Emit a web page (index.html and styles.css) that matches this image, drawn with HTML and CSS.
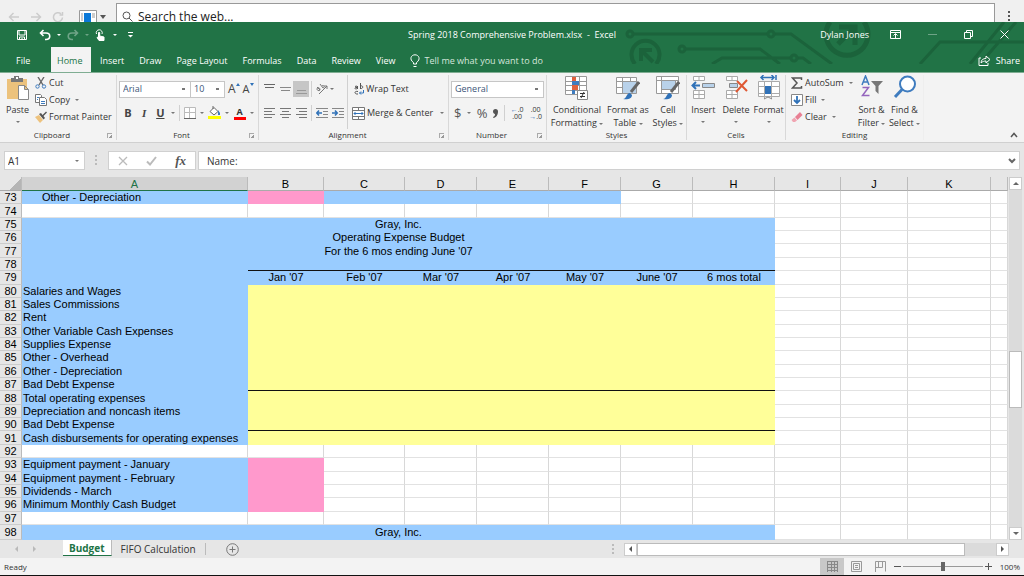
FILE: index.html
```html
<!DOCTYPE html>
<html lang="en">
<head>
  <meta charset="UTF-8">
  <meta name="viewport" content="width=device-width, initial-scale=1.0">
  <title>Spring 2018 Comprehensive Problem.xlsx - Excel</title>
  <link rel="stylesheet" href="styles.css">
</head>
<body>
  <div class="browser">
    <button class="nav" aria-label="Back"><svg width="12" height="12" viewBox="0 0 12 12"><path d="M11 6H1.500M5.500 2L1.500 6l4 4"/></svg></button>
    <button class="nav" aria-label="Forward"><svg width="12" height="12" viewBox="0 0 12 12"><path d="M1 6h9.500M6.500 2l4 4-4 4"/></svg></button>
    <button class="nav" aria-label="Reload"><svg width="12" height="12" viewBox="0 0 12 12"><path d="M10.500 6.500A4.500 4.500 0 1 1 9 2.800M10.500 1v3h-3"/></svg></button>
    <button class="panel" aria-label="Panels">
      <svg width="18" height="13" viewBox="0 0 18 13"><path fill="#fff" stroke="#999" d="M.5.5h17v13H.5z"/><path fill="#ccc" d="M2 3h2v8H2zM13 3h3v5h-3z"/><path fill="#0a78d8" d="M5 3h7v9H5z"/></svg>
      <svg width="6" height="4" viewBox="0 0 6 4"><path fill="#555" d="M0 0h6L3 4z"/></svg>
    </button>
    <label class="search">
      <svg width="11" height="11" viewBox="0 0 11 11"><circle cx="4.500" cy="4.500" r="3.500"/><path d="M7 7l3.500 3.500"/></svg>
      <input type="text" value="Search the web..." aria-label="Search the web">
    </label>
    <button class="more" aria-label="More"><svg width="3" height="11" viewBox="0 0 3 11"><path fill="#555" d="M0 0h2v2H0zM0 4h2v2H0zM0 8h2v2H0z"/></svg></button>
  </div>

  <header class="head">
    <svg class="circuit" width="400" height="42" viewBox="0 0 400 42">
      <g fill="none" stroke="#1b633b" stroke-width="3">
        <circle cx="6" cy="12" r="3"/><path d="M9 12h134M150 12h17l41 30"/><circle cx="147" cy="12" r="3"/>
        <circle cx="58" cy="27" r="3"/><path d="M61 27h75l20 15M88 42l10-6h68M174 36h5l8 6"/><circle cx="170" cy="36" r="3"/>
        <path d="M296 42l20-22h84M346 42L380 0M356 42L392 0"/>
        <path stroke-width="4" d="M11 42a14 14 0 1 1 21 0"/>
        <path stroke-width="4" d="M17 28l12 12M17 39V28h11"/>
        <path stroke-width="5" d="M206 0a21 21 0 1 0 34 0M214 22l17-17M215 5h16v18"/>
      </g>
    </svg>
    <div class="title">
      <div class="quick">
        <button aria-label="Save"><svg width="12" height="12" viewBox="0 0 12 12"><path d="M1.500 1.500h9v9h-9zM3 1v5h6V1M3.500 11V8h5v3M6 9v2"/></svg></button>
        <button class="undo" aria-label="Undo"><svg width="12" height="12" viewBox="0 0 12 12"><path stroke-width="1.600" d="M4.500 1L1.500 4l3 3M2 4h5c5 0 5 6.500 0 6.500H6"/></svg></button><span class="caret"></span>
        <button class="dim" aria-label="Redo"><svg width="12" height="12" viewBox="0 0 12 12"><path stroke-width="1.600" d="M7.500 1l3 3-3 3M10 4H5c-5 0-5 6.500 0 6.500h1"/></svg></button><span class="caret dim"></span>
        <button aria-label="Touch mode"><svg width="12" height="12" viewBox="0 0 12 12"><path d="M1.500 5a3 3 0 1 1 5.500 0"/><path fill="#fff" d="M3.500 3.500h1.200V7l4.300 1v3.500H4L2 8.500l1.500-.5z"/></svg></button><span class="caret"></span>
        <button class="custom" aria-label="Customize toolbar"><svg width="5" height="6" viewBox="0 0 5 6"><path d="M0 .500h5"/><path fill="#fff" stroke="none" d="M0 3h5L2.500 5.500z"/></svg></button>
      </div>
      <h1>Spring 2018 Comprehensive Problem.xlsx &nbsp;- &nbsp;Excel</h1>
      <div class="account">
        <span class="user">Dylan Jones</span>
        <button aria-label="Ribbon display options"><svg width="11" height="9" viewBox="0 0 11 9"><path d="M.5.5h10v8H.5zM.5 2.500h10M5.500 8V4M3.500 5.500l2-2 2 2"/></svg></button>
        <button class="dim" aria-label="Minimize"><svg width="9" height="9" viewBox="0 0 9 9"><path d="M0 4.500h9"/></svg></button>
        <button aria-label="Restore"><svg width="9" height="9" viewBox="0 0 9 9"><path d="M.5 2.500h6v6h-6zM2.500 2.500v-2h6v6h-2"/></svg></button>
        <button aria-label="Close"><svg width="9" height="9" viewBox="0 0 9 9"><path d="M.5.5l8 8M8.500.5l-8 8"/></svg></button>
      </div>
    </div>
    <nav class="tabs">
      <a href="#" class="file">File</a>
      <a href="#" class="active">Home</a>
      <a href="#">Insert</a>
      <a href="#">Draw</a>
      <a href="#">Page Layout</a>
      <a href="#">Formulas</a>
      <a href="#">Data</a>
      <a href="#">Review</a>
      <a href="#">View</a>
      <a href="#" class="tell"><svg width="10" height="14" viewBox="0 0 10 14"><path d="M3.500 10V8.500C-1 5.500 1 .8 5 .8s6 4.700 1.500 7.700V10zM3.500 12.500h3"/></svg>Tell me what you want to do</a>
      <a href="#" class="share"><svg width="13" height="11" viewBox="0 0 13 11"><path d="M3 3H1v7.500h9V8M3 8c0-3 2-4.500 5-4.500V1l4 3.500-4 3.500V6C6 6 4.500 6.500 3 8z"/></svg>Share</a>
    </nav>
  </header>

  <div class="ribbon">
    <section class="group clipboard">
      <div class="tools">
        <button class="big"><svg width="24" height="26" viewBox="0 0 24 26"><path fill="#ecc27c" d="M1 4h20v20H1z"/><path fill="#777" d="M5 3h3V1h5v2h4v4H5z"/><path fill="#fff" d="M10 2h2v2h-2z"/><path fill="#fff" stroke="#888" d="M12.500 10.500h6l4 4v10h-10zM18.500 10.500v4h4"/></svg><span>Paste</span><span class="caret"></span></button>
        <div class="list">
          <button><svg width="12" height="12" viewBox="0 0 12 12"><path stroke="#666" stroke-width="1.400" d="M3 0l5 8M9 0L4 8"/><circle cx="2.500" cy="9.500" r="1.700" stroke="#3f7cbf"/><circle cx="9" cy="9.500" r="1.700" stroke="#3f7cbf"/></svg>Cut</button>
          <button><svg width="12" height="12" viewBox="0 0 12 12"><path fill="#fff" stroke="#777" d="M.5.500h5l1 1v7h-6z"/><path fill="#fff" stroke="#777" d="M4.500 3.500h5l2 2v6h-7z"/><path stroke="#3f7cbf" d="M2 3.500h2M2 5.500h1M6 7.500h4M6 9.500h4"/></svg>Copy <span class="caret"></span></button>
          <button><svg width="12" height="12" viewBox="0 0 12 12"><path fill="#edc27d" d="M0 6l4-2 4 5-3 3z"/><path fill="#555" d="M4 3l2-1 1.500 2L11 .500l1 1L8.500 5 10 7 8.500 8.500z"/></svg>Format Painter</button>
        </div>
      </div>
      <h2>Clipboard</h2><i class="launch"></i>
    </section>

    <section class="group font">
      <div class="tools stack">
        <div class="line">
          <select class="face" aria-label="Font"><option>Arial</option></select>
          <select class="size" aria-label="Font size"><option>10</option></select>
          <button class="letter grow" aria-label="Grow font">A<svg width="4" height="12" viewBox="0 0 4 12"><path fill="#3072b8" d="M0 3l2-3 2 3z"/></svg></button>
          <button class="letter shrink" aria-label="Shrink font">A<svg width="4" height="12" viewBox="0 0 4 12"><path fill="#3072b8" d="M0 0h4L2 3z"/></svg></button>
        </div>
        <div class="line spread">
          <button class="letter"><b>B</b></button>
          <button class="letter"><em>I</em></button>
          <button class="letter"><u>U</u></button><span class="caret"></span>
          <span class="rule"></span>
          <button aria-label="Borders"><svg width="12" height="12" viewBox="0 0 12 12"><path fill="#fff" stroke="#bbb" d="M.5.500h11v11H.5zM5.500 0v12M0 5.500h12"/><path stroke="#666" d="M0 11.500h12"/></svg></button><span class="caret"></span>
          <button aria-label="Fill color"><svg width="13" height="14" viewBox="0 0 13 14"><path fill="#ff0" d="M0 10h13v3H0z"/><path fill="#fff" stroke="#666" d="M2 5.500l4-4 4 4-4 3.500zM5 3V0"/><path fill="#3f7cbf" d="M10 4l2 3v2h-2z"/></svg></button><span class="caret"></span>
          <button aria-label="Font color" class="ink">A</button><span class="caret"></span>
        </div>
      </div>
      <h2>Font</h2><i class="launch"></i>
    </section>

    <section class="group align">
      <div class="tools">
        <div class="stack left">
          <div class="line">
            <button aria-label="Top align"><svg width="11" height="12" viewBox="0 0 11 12"><path stroke="#666" d="M0 1.500h11M1 4.500h9"/></svg></button>
            <button aria-label="Middle align"><svg width="11" height="12" viewBox="0 0 11 12"><path stroke="#888" d="M0 4.500h11M1 7.500h9"/></svg></button>
            <button class="pressed" aria-label="Bottom align"><svg width="11" height="12" viewBox="0 0 11 12"><path stroke="#999" d="M1 7.500h9M0 10.500h11"/></svg></button>
            <span class="rule"></span>
            <button aria-label="Orientation"><svg width="12" height="12" viewBox="0 0 12 12"><path stroke="#777" d="M3 11l8-8M8 3h3v3M1 4l3 3M1 6c0-2 3-2 3 1 0 1-3 1-3-1M4 1l3 4M6 3c2-2 3 2 1 2"/></svg></button><span class="caret"></span>
          </div>
          <div class="line">
            <button aria-label="Align left"><svg width="11" height="12" viewBox="0 0 11 12"><path stroke="#777" d="M0 1.500h11M0 4.500h8M0 7.500h11M0 10.500h8"/></svg></button>
            <button aria-label="Center"><svg width="11" height="12" viewBox="0 0 11 12"><path stroke="#777" d="M0 1.500h11M2 4.500h7M0 7.500h11M2 10.500h7"/></svg></button>
            <button aria-label="Align right"><svg width="11" height="12" viewBox="0 0 11 12"><path stroke="#777" d="M0 1.500h11M3 4.500h8M0 7.500h11M3 10.500h8"/></svg></button>
            <span class="rule"></span>
            <button aria-label="Decrease indent"><svg width="12" height="12" viewBox="0 0 12 12"><path stroke="#888" d="M0 1.500h12M7 4.500h5M7 7.500h5M0 10.500h12"/><path stroke="#3072b8" stroke-width="1.600" d="M6 6H1M3 3.500L.800 6 3 8.500"/></svg></button>
            <button aria-label="Increase indent"><svg width="12" height="12" viewBox="0 0 12 12"><path stroke="#888" d="M0 1.500h12M7 4.500h5M7 7.500h5M0 10.500h12"/><path stroke="#3072b8" stroke-width="1.600" d="M0 6h5M3 3.500L5.200 6 3 8.500"/></svg></button>
          </div>
        </div>
        <div class="stack right">
          <div class="line"><button class="wrap"><svg width="10" height="12" viewBox="0 0 10 12"><path stroke="#555" d="M3.500 3v3M1 3.500c2-1 2.500 0 2.500 1.500C2 7 0 5.500 1.500 4.500h2M6.500 0v6M6.500 3c3-1 3 3 0 2.500M4 8.500c-4-1-4 3 0 2.500"/><path stroke="#3072b8" d="M9.500 7v3h-4M7 8.500L5.500 10 7 11.500"/></svg>Wrap Text</button></div>
          <div class="line"><button><svg width="13" height="13" viewBox="0 0 13 13"><path fill="#fff" stroke="#777" d="M.5.500h12v12H.5zM0 3.500h13M0 9.500h13M6.500 0v3M6.500 10v3"/><path stroke="#3072b8" d="M2 6.500h9M3.500 5L2 6.500 3.500 8M9.500 5L11 6.500 9.500 8"/></svg>Merge &amp; Center</button><span class="caret end"></span></div>
        </div>
      </div>
      <h2>Alignment</h2><i class="launch"></i>
    </section>

    <section class="group number">
      <div class="tools stack">
        <div class="line"><select class="format" aria-label="Number format"><option>General</option></select></div>
        <div class="line spread">
          <button class="sign">$</button><span class="caret"></span>
          <button class="sign">%</button>
          <button aria-label="Comma style"><svg width="5" height="9" viewBox="0 0 5 9"><path fill="#555" d="M0 2.500a2.400 2.400 0 1 1 5 0C5 6 3 8.500.500 9L0 8c1.500-.500 2-1.500 2-3C1 5 0 4 0 2.500z"/></svg></button>
          <span class="rule"></span>
          <button class="decimal" aria-label="Increase decimal"><span><b>←</b>.0</span><span>.00</span></button>
          <button class="decimal" aria-label="Decrease decimal"><span>.00</span><span><b>→</b>.0</span></button>
        </div>
      </div>
      <h2>Number</h2><i class="launch"></i>
    </section>

    <section class="group styles">
      <div class="tools">
        <button class="big"><svg width="24" height="26" viewBox="0 0 24 26"><path fill="#fff" stroke="#999" d="M.5 1.500h21v18H.5zM0 6.500h22M0 10.500h22M0 15.500h22M7.500 1v19M14.500 1v19"/><path fill="#e0623d" d="M7 2h4v4H7zM7 10h6v5H7z"/><path fill="#3f7cbf" d="M7 6h7v4H7zM7 15h3v4H7z"/><path fill="#fff" stroke="#888" d="M12.500 15.500h10v9h-10z"/><path stroke="#333" d="M15 18.500h5M15 21.500h5M19 17l-3 6"/></svg><span>Conditional</span><span>Formatting <i class="caret"></i></span></button>
        <button class="big"><svg width="24" height="26" viewBox="0 0 24 26"><path fill="#fff" stroke="#999" d="M.5 2.500h20v16H.5zM0 6.500h21M0 12.500h21M6.500 2v17M14.500 2v17"/><path fill="#b9d2ea" d="M7 7h13v11H7z"/><path stroke="#666" stroke-width="3" d="M23 7l-8 10"/><path fill="#3072b8" d="M7 24c4 0 3-6 7-6l2 2c0 4-5 5-9 4z"/></svg><span>Format as</span><span>Table <i class="caret"></i></span></button>
        <button class="big"><svg width="24" height="26" viewBox="0 0 24 26"><path fill="#fff" stroke="#999" d="M.5 1.500h22v17H.5zM0 5.500h23M5.500 1v18"/><path fill="#b9d2ea" stroke="#999" d="M5.500 5.500h14v9h-14z"/><path stroke="#666" stroke-width="3" d="M23 7l-8 10"/><path fill="#3072b8" d="M7 24c4 0 3-6 7-6l2 2c0 4-5 5-9 4z"/></svg><span>Cell</span><span>Styles <i class="caret"></i></span></button>
      </div>
      <h2>Styles</h2>
    </section>

    <section class="group cells">
      <div class="tools">
        <button class="big"><svg width="24" height="26" viewBox="0 0 24 26"><path fill="#fff" stroke="#aaa" d="M2.500 1.500h11v4h-11zM8 1v5M2.500 15.500h11v8h-11zM8 15v9M2 19.500h12"/><path fill="#b9d2ea" stroke="#888" d="M11.500 8.500h12v4h-12z"/><path stroke="#3072b8" stroke-width="2" d="M9 10.500H1M5 7l-3.500 3.500L5 14"/></svg><span>Insert</span><span class="caret"></span></button>
        <button class="big"><svg width="24" height="26" viewBox="0 0 24 26"><path fill="#fff" stroke="#aaa" d="M2.500 1.500h11v4h-11zM8 1v5M2.500 15.500h11v8h-11zM8 15v9M2 19.500h12"/><path fill="#b9d2ea" stroke="#888" d="M5.500 8.500h8v4h-8z"/><path stroke="#df5833" stroke-width="2" d="M13 6l10 10M23 5L12 17"/></svg><span>Delete</span><span class="caret"></span></button>
        <button class="big"><svg width="24" height="26" viewBox="0 0 24 26"><path fill="#fff" stroke="#aaa" d="M1.500 6.500h21v15h-21zM1 11.500h22M1 18.500h22M7.500 6v18M14.500 6v18"/><path fill="#3072b8" d="M8 11h6v8H8z"/><path stroke="#3072b8" stroke-width="1.500" d="M4 2.500h13M6.500 0L4 2.500 6.500 5M14.500 0L17 2.500 14.500 5M19 0v5"/><path stroke="#888" d="M7 24l4-2 4 2"/></svg><span>Format</span><span class="caret"></span></button>
      </div>
      <h2>Cells</h2>
    </section>

    <section class="group editing">
      <div class="tools">
        <div class="list">
          <button><svg width="12" height="12" viewBox="0 0 12 12"><path stroke="#555" stroke-width="1.500" d="M10.500 3V1H1.500L6 6l-4.500 5h9V9"/></svg>AutoSum <span class="caret"></span></button>
          <button><svg width="12" height="12" viewBox="0 0 12 12"><path fill="#fff" stroke="#888" d="M.5.500h11v11H.5z"/><path stroke="#3072b8" stroke-width="1.800" d="M6 2v7M3 6l3 3 3-3"/></svg>Fill <span class="caret"></span></button>
          <button><svg width="12" height="12" viewBox="0 0 12 12"><path fill="#e87f93" d="M4 6l5-5 2.500 3-5 5z"/><path fill="#f0a5b2" d="M3.500 6.500L6 9.500 4 11H2L.5 9z"/></svg>Clear <span class="caret"></span></button>
        </div>
        <button class="big"><svg width="24" height="26" viewBox="0 0 24 26"><path stroke="#3f7cbf" stroke-width="1.500" d="M2 10L5.500 1 9 10M3.500 7h4"/><path stroke="#9464bd" stroke-width="1.500" d="M2.500 12.500h6l-6 8h7"/><path fill="#777" d="M11 6h12l-4.500 5v8L15.500 16v-5z"/></svg><span>Sort &amp;</span><span>Filter <i class="caret"></i></span></button>
        <button class="big"><svg width="24" height="26" viewBox="0 0 24 26"><circle cx="14.500" cy="9" r="7.500" fill="#fff" stroke="#3f7cbf" stroke-width="2"/><path stroke="#3f7cbf" stroke-width="3" d="M9 14.500L2 22"/></svg><span>Find &amp;</span><span>Select <i class="caret"></i></span></button>
      </div>
      <h2>Editing</h2>
    </section>
    <button class="fold" aria-label="Collapse ribbon"><svg width="8" height="6" viewBox="0 0 8 6"><path stroke="#555" stroke-width="1.500" d="M1 5l3-3.500L7 5"/></svg></button>
  </div>

  <div class="formula">
    <label class="namebox"><input type="text" value="A1" aria-label="Name box"><span class="caret"></span></label>
    <span class="dots"></span>
    <div class="fx">
      <button aria-label="Cancel"><svg width="10" height="10" viewBox="0 0 10 10"><path stroke="#bbb" stroke-width="1.300" d="M1 1l8 8M9 1L1 9"/></svg></button>
      <button aria-label="Enter"><svg width="11" height="10" viewBox="0 0 11 10"><path stroke="#bbb" stroke-width="2" d="M1 5.500L4 8.500 10 1"/></svg></button>
      <button class="fn">fx</button>
    </div>
    <label class="formula-box"><input type="text" value="Name:" aria-label="Formula bar"><svg width="8" height="6" viewBox="0 0 8 6"><path stroke="#666" stroke-width="2" d="M1 1l3 3 3-3"/></svg></label>
  </div>

  <main class="sheet">
    <table>
      <colgroup>
        <col class="c-row"><col class="c-a"><col class="c-b"><col class="c-c">
        <col class="c-m"><col class="c-m"><col class="c-m"><col class="c-m">
        <col class="c-h"><col class="c-i"><col class="c-j"><col class="c-k"><col>
      </colgroup>
      <thead>
        <tr><th class="corner"></th><th class="picked">A</th><th>B</th><th>C</th><th>D</th><th>E</th><th>F</th><th>G</th><th>H</th><th>I</th><th>J</th><th>K</th><th></th></tr>
      </thead>
      <tbody id="rows"></tbody>
    </table>
    <div class="vscroll">
      <button aria-label="Scroll up"><i class="up"></i></button>
      <div class="track"><div class="thumb"></div></div>
      <button aria-label="Scroll down"><i class="down"></i></button>
    </div>
  </main>

  <div class="bottom">
    <div class="arrows"><i class="prev"></i><i class="next"></i></div>
    <button class="tab current">Budget</button>
    <button class="tab">FIFO Calculation</button>
    <button class="add" aria-label="New sheet"><svg width="13" height="13" viewBox="0 0 13 13"><circle cx="6.500" cy="6.500" r="5.800" stroke="#777"/><path stroke="#777" d="M6.500 3.500v6M3.500 6.500h6"/></svg></button>
    <span class="dots"></span>
    <div class="hscroll">
      <button aria-label="Scroll left"><i class="prev"></i></button>
      <div class="track"><div class="thumb"></div></div>
      <button aria-label="Scroll right"><i class="next"></i></button>
    </div>
  </div>

  <footer class="status">
    <span class="ready">Ready</span>
    <button class="view on" aria-label="Normal"><svg width="11" height="11" viewBox="0 0 11 11"><path stroke="#888" d="M0 .500h11M0 3.500h11M0 6.500h11M0 9.500h11M.500 0v11M4.500 0v11M7.500 0v11M10.500 0v11"/></svg></button>
    <button class="view" aria-label="Page layout"><svg width="11" height="11" viewBox="0 0 11 11"><path stroke="#999" d="M.500.500h10v10H.500zM2.500 2.500h6v6h-6zM4 4.500h3M4 6.500h3"/></svg></button>
    <button class="view" aria-label="Page break preview"><svg width="11" height="11" viewBox="0 0 11 11"><path stroke="#999" d="M.500 11V.500h10v10M3.500 0v6.500h4V0M0 6.500h4"/></svg></button>
    <button class="step" aria-label="Zoom out"><svg width="7" height="7" viewBox="0 0 7 7"><path stroke="#555" d="M0 3.500h7"/></svg></button>
    <input type="range" min="0" max="100" value="50" aria-label="Zoom">
    <button class="step" aria-label="Zoom in"><svg width="7" height="7" viewBox="0 0 7 7"><path stroke="#555" d="M0 3.500h7M3.500 0v7"/></svg></button>
    <span class="percent">100%</span>
  </footer>

  <script>
    const months = ["Jan '07", "Feb '07", "Mar '07", "Apr '07", "May '07", "June '07", "6 mos total"];

    // kind decides how columns A-H are filled
    const rows = [
      [73, "first", "Other - Depreciation"],
      [74, "blank"],
      [75, "title", "Gray, Inc."],
      [76, "title", "Operating Expense Budget"],
      [77, "title", "For the 6 mos ending June '07"],
      [78, "line"],
      [79, "months"],
      [80, "entry", "Salaries and Wages"],
      [81, "entry", "Sales Commissions"],
      [82, "entry", "Rent"],
      [83, "entry", "Other Variable Cash Expenses"],
      [84, "entry", "Supplies Expense"],
      [85, "entry", "Other - Overhead"],
      [86, "entry", "Other - Depreciation"],
      [87, "total", "Bad Debt Expense"],
      [88, "entry", "Total operating expenses"],
      [89, "entry", "Depreciation and noncash items"],
      [90, "total", "Bad Debt Expense"],
      [91, "entry", "Cash disbursements for operating expenses"],
      [92, "blank"],
      [93, "input", "Equipment payment - January"],
      [94, "input", "Equipment payment - February"],
      [95, "input", "Dividends - March"],
      [96, "input", "Minimum Monthly Cash Budget"],
      [97, "blank"],
      [98, "title", "Gray, Inc."]
    ];

    const cell = (cls, text = "") => `<td class="${cls}">${text}</td>`;

    function fill(kind, text) {
      switch (kind) {
        case "first": return cell("blue indent", text) + cell("pink") + cell("blue").repeat(4) + cell("").repeat(2);
        case "title": return `<td class="blue center" colspan="8">${text}</td>`;
        case "line": return cell("blue") + cell("blue rule-b").repeat(7);
        case "months": return cell("blue") + months.map(m => cell("blue center", m)).join("");
        case "entry": return cell("blue", text) + cell("yellow").repeat(7);
        case "total": return cell("blue", text) + cell("yellow rule-b").repeat(7);
        case "input": return cell("blue", text) + cell("pink") + cell("").repeat(6);
        default: return cell("").repeat(8);
      }
    }

    document.getElementById("rows").innerHTML = rows.map(([n, kind, text]) =>
      `<tr><th>${n}</th>${fill(kind, text)}${cell("").repeat(4)}</tr>`
    ).join("");
  </script>
</body>
</html>
```
FILE: styles.css
```css
* { margin: 0; padding: 0; box-sizing: border-box; }

html, body { height: 100%; }

body {
  display: flex;
  flex-direction: column;
  font: 9px/12px "Open Sans", "Noto Sans", sans-serif;
  color: #333;
  background: #e6e6e6;
  border-bottom: 1px solid #111;
  overflow: hidden;
}

button, input, select {
  font: inherit;
  color: inherit;
  background: none;
  border: none;
  outline: none;
}

button {
  display: flex;
  align-items: center;
  white-space: nowrap;
}

a { color: inherit; text-decoration: none; }
svg { flex: none; fill: none; }
i { font-style: normal; }

.caret {
  display: inline-block;
  flex: none;
  border: 2px solid transparent;
  border-top: 2px solid #777;
  border-bottom: 0;
  vertical-align: middle;
}

/* browser bar */
.browser {
  display: flex;
  flex: none;
  height: 22px;
  padding: 3px 8px 0;
  background: #f0f0f0;
  overflow: hidden;
}

.browser > button { height: 27px; }
.nav { width: 22px; }
.nav svg { stroke: #ccc; stroke-width: 1.5; }
.panel { gap: 3px; width: 42px; padding-left: 5px; }

.search {
  display: flex;
  flex: 1;
  align-items: center;
  gap: 5px;
  height: 27px;
  padding-left: 5px;
  background: #fff;
  border: 1px solid #999;
}

.search svg { stroke: #555; }
.search input { flex: 1; font-size: 12px; color: #222; }
.more { width: 21px; padding-left: 13px; }

/* green header */
.head {
  position: relative;
  flex: none;
  color: #fff;
  background: #217346;
  border-bottom: 1px solid #7fad92;
}

.circuit { position: absolute; top: 0; right: 0; }

.title {
  position: relative;
  display: grid;
  grid-template-columns: 1fr auto 1fr;
  align-items: center;
  height: 25px;
}

.title svg, .tabs svg { stroke: #fff; }
.title h1 { font-size: 9px; font-weight: normal; }
.quick { display: flex; align-items: center; gap: 6px; padding-left: 16px; }
.quick .undo { margin-left: 5px; }
.quick .custom { margin-left: 5px; }
.quick .caret { border-top-color: #fff; }
.dim { opacity: .35; }
.account { display: flex; align-items: center; justify-content: flex-end; padding-right: 15px; gap: 27px; }
.user { margin-right: -6px; }

.tabs { position: relative; display: flex; height: 25px; }
.tabs a { display: flex; align-items: center; padding: 2px 7px 0 8px; }
.tabs .file { width: 51px; padding-left: 16px; }
.tabs .active { width: 40px; padding-left: 6px; margin-right: 1px; color: #217346; background: #f3f3f3; }
.tabs .tell { gap: 4px; color: #d5e6dc; }
.tabs .share { gap: 5px; margin-left: auto; padding-right: 4px; }

/* ribbon */
.ribbon {
  display: flex;
  flex: none;
  height: 70px;
  background: #f3f3f3;
  border-bottom: 1px solid #d0d0d0;
}

.group {
  position: relative;
  display: flex;
  flex: none;
  flex-direction: column;
  margin: 2px 0;
  border-right: 1px solid #d8d8d8;
}

.group h2 { font-size: 8px; line-height: 11px; font-weight: normal; text-align: center; }
.tools { display: flex; flex: 1; }
.clipboard { width: 117px; }
.clipboard h2 { padding-right: 12px; }
.font { width: 142px; }
.font h2 { padding-right: 12px; }
.align { width: 190px; }
.align h2, .number h2 { padding-right: 12px; }
.number { width: 98px; }
.styles { width: 140px; }
.cells { width: 99px; }
.editing { width: 138px; border-color: #eee; }

/* dialog launcher in the group's corner */
.launch {
  position: absolute;
  right: 4px;
  bottom: 2px;
  width: 5px;
  height: 5px;
  border-top: 1px solid #aaa;
  border-left: 1px solid #aaa;
  background: linear-gradient(135deg, transparent 55%, #999 55%);
}

.big { flex-direction: column; flex: 1; line-height: 13px; }
.big svg { margin-bottom: 2px; }
.big > .caret { margin-top: 5px; }
.clipboard .big { flex: none; width: 35px; }
.styles .big:first-child { flex: none; width: 60px; }
.styles .big:last-child { flex: none; width: 38px; }
.editing .tools { padding-right: 2px; }
.editing .list { width: 69px; padding-left: 5px; }
.list { display: flex; flex-direction: column; gap: 1px; }
.list button { gap: 2px; height: 16px; }
.list .caret { margin-left: 3px; }

.stack { display: flex; flex-direction: column; gap: 8px; padding-top: 6px; }
.line { display: flex; align-items: center; height: 16px; }
.spread { justify-content: space-between; padding: 0 4px 0 3px; }
.font .tools, .number .tools { padding-left: 2px; }
.rule { width: 1px; height: 16px; background: #d0d0d0; }

select {
  height: 17px;
  padding-left: 3px;
  color: #3b5578;
  appearance: none;
  border: 1px solid #c6c6c6;
  background: linear-gradient(#777, #777) right 5px center / 3px 2px no-repeat #fff;
}

.face { width: 72px; }
.size { width: 35px; margin-left: -1px; }
.format { width: 93px; }
.letter { font-size: 11px; color: #444; }
.spread .letter { justify-content: center; width: 12px; }
.letter em { font-family: "Liberation Serif", serif; }
.letter u, .letter em { font-weight: bold; }
.grow { margin-left: 3px; font-size: 12px; }
.shrink { margin-left: 3px; }
.ink { padding: 0 3px; font-weight: bold; border-bottom: 3px solid #f00; line-height: 11px; }

.align .left { width: 89px; padding-left: 2px; border-right: 1px solid #d0d0d0; }
.align .left button { width: 16px; height: 16px; justify-content: center; }
.align .right { flex: 1; padding-left: 4px; }
.align .right button { gap: 2px; }
.align .wrap { padding-left: 2px; }
.align .rule { margin: 0 2px; }
.pressed { background: #c6c6c6; }
.end { margin: 0 4px 0 auto; }
.sign { font-size: 13px; color: #555; }
.decimal { flex-direction: column; font-size: 7px; line-height: 7px; }
.decimal b { color: #3072b8; }
.fold { align-self: flex-end; margin: 0 6px 4px auto; }

/* formula bar */
.formula { display: flex; flex: none; height: 34px; padding: 8px 4px 7px; }
.namebox, .fx, .formula-box { display: flex; align-items: center; background: #fff; border: 1px solid #d0d0d0; }
.namebox { width: 81px; padding: 0 5px 0 3px; }
.namebox input { flex: 1; min-width: 0; font-size: 10px; }
.formula .dots { margin: 4px 11px 4px 10px; }
.dots { width: 2px; height: 10px; background: repeating-linear-gradient(#bbb 0 2px, transparent 2px 4px); }
.fx { width: 88px; justify-content: space-between; padding: 0 9px; }
.fn { font: italic bold 13px/13px "Liberation Serif", serif; color: #555; }
.formula-box { flex: 1; margin-left: 2px; padding: 0 3px 0 8px; }
.formula-box input { flex: 1; font-size: 10px; }

/* sheet */
.sheet {
  display: flex;
  flex: 1;
  min-height: 0;
  gap: 1px;
  font: 11px/12px "Liberation Sans", Arial, sans-serif;
  color: #000;
}

table {
  flex: 1;
  width: 0;
  height: 100%;
  table-layout: fixed;
  border-spacing: 0;
  background: #fff;
}

.c-row { width: 22px; }
.c-a { width: 226px; }
.c-b { width: 76px; }
.c-c { width: 81px; }
.c-m { width: 72px; }
.c-h { width: 82px; }
.c-i { width: 66px; }
.c-j { width: 67px; }
.c-k { width: 83px; }

th { font-weight: normal; background: #e6e6e6; border-right: 1px solid #bbb; }
thead th { height: 14px; border-bottom: 1px solid #aaa; }
tbody th { border-bottom: 1px solid #ccc; }
tbody tr:last-child > * { height: 15px; }

.corner { background: linear-gradient(135deg, #e6e6e6 65%, #b5b5b5 65%); }
thead .picked { color: #217346; background: #d2d2d2; border-bottom-color: #217346; }

td {
  padding-left: 1px;
  white-space: nowrap;
  border-right: 1px solid #d8d8d8;
  border-bottom: 1px solid #e2e2e2;
}

.blue { background: #9cf; border-color: #9cf; }
.pink { background: #f9c; border-color: #f9c; }
.yellow { background: #ff9; border-color: #ff9; }
.rule-b { border-right: 0; border-bottom-color: #111; }
.center { text-align: center; }
.indent { padding-left: 20px; }

.vscroll { display: flex; flex-direction: column; width: 15px; padding-right: 2px; }
.vscroll button, .hscroll button { justify-content: center; flex: none; width: 13px; height: 13px; background: #fff; border: 1px solid #ccc; }
.track { flex: 1; background: #dbdbdb; }
.thumb { background: #fff; border: 1px solid #bbb; }
.vscroll .track { display: grid; grid-template-rows: 161fr 56fr 119fr; }
.vscroll .thumb { grid-row: 2; }

.up, .down { border: 3px solid transparent; }
.up { border-bottom-color: #666; border-top: 0; }
.down { border-top-color: #666; border-bottom: 0; }
.prev, .next { border: 3px solid transparent; }
.prev { border-right-color: #555; border-left: 0; }
.next { border-left-color: #555; border-right: 0; }

/* sheet tabs */
.bottom { display: flex; flex: none; align-items: center; height: 18px; padding-right: 15px; }
.arrows { display: flex; gap: 15px; width: 63px; padding-left: 15px; opacity: .3; }
.tab { height: 12px; padding: 0 9px; font-size: 10px; border-right: 1px solid #bbb; }
.current { align-self: flex-start; height: 16px; padding: 0 6px; font-weight: bold; color: #217346; background: #fff; border-bottom: 1px solid #217346; }
.add { margin-left: 20px; }
.bottom .dots { margin-left: auto; margin-right: 10px; }
.hscroll { display: flex; width: 385px; }
.hscroll .track { display: grid; grid-template-columns: 328fr 31fr; }

/* status bar */
.status { display: flex; flex: none; align-items: center; height: 17px; padding: 0 4px; background: #f3f3f3; }
.ready { margin-right: auto; font-size: 8px; }
.view { justify-content: center; width: 24px; height: 17px; }
.on { background: #c8c8c8; }
.step { justify-content: center; width: 11px; }
.percent { width: 26px; text-align: right; font-size: 8px; }

input[type="range"] {
  width: 80px;
  height: 10px;
  appearance: none;
  background: linear-gradient(#999, #999) center / 100% 1px no-repeat;
}

input[type="range"]::-webkit-slider-thumb {
  appearance: none;
  width: 4px;
  height: 9px;
  background: #666;
}
```
